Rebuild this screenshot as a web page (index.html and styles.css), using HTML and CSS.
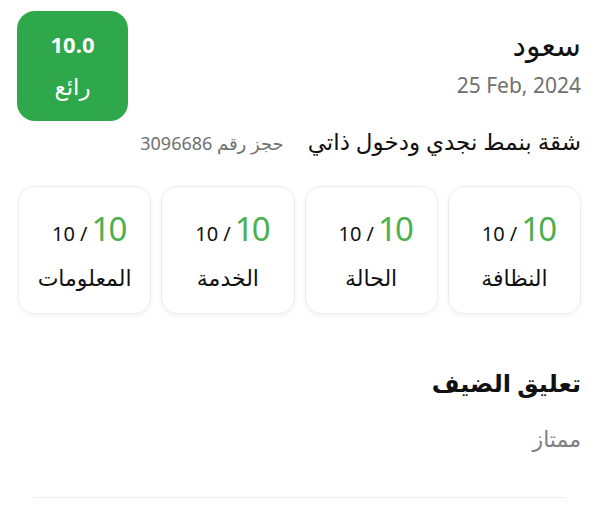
FILE: index.html
```html
<!DOCTYPE html>
<html lang="ar" dir="rtl">
<head>
<meta charset="utf-8">
<link rel="stylesheet" href="styles.css">
</head>
<body>
<div class="page">
  <div class="header">
    <div class="guest">
      <div class="name">سعود</div>
      <div class="date" dir="ltr">25 Feb, 2024</div>
    </div>
    <div class="score">
      <div class="score-num">10.0</div>
      <div class="score-label">رائع</div>
    </div>
  </div>
  <div class="title-row">
    <div class="title">شقة بنمط نجدي ودخول ذاتي</div>
    <div class="booking">حجز رقم 3096686</div>
  </div>
  <div class="cards">
    <div class="card">
      <div class="rate"><span class="small">10 /</span><span class="big">10</span></div>
      <div class="label">النظافة</div>
    </div>
    <div class="card">
      <div class="rate"><span class="small">10 /</span><span class="big">10</span></div>
      <div class="label">الحالة</div>
    </div>
    <div class="card">
      <div class="rate"><span class="small">10 /</span><span class="big">10</span></div>
      <div class="label">الخدمة</div>
    </div>
    <div class="card">
      <div class="rate"><span class="small">10 /</span><span class="big">10</span></div>
      <div class="label">المعلومات</div>
    </div>
  </div>
  <div class="comment">
    <div class="comment-title">تعليق الضيف</div>
    <div class="comment-text">ممتاز</div>
  </div>
  <div class="divider"></div>
</div>
</body>
</html>
```
FILE: styles.css
```css
html, body {
  margin: 0;
  padding: 0;
  background: #ffffff;
}
body {
  font-family: "Noto Sans", "DejaVu Sans", sans-serif;
  color: #111;
}
.page {
  padding: 11px 19px 0 17px;
}
.header {
  display: flex;
  justify-content: space-between;
  align-items: flex-start;
}
.guest {
  padding-top: 14px;
}
.name {
  font-size: 30px;
  line-height: 40px;
  color: #111;
}
.date {
  font-size: 21px;
  line-height: 28px;
  color: #707070;
  margin-top: 6px;
  text-align: right;
}
.score {
  width: 111px;
  height: 110px;
  box-sizing: border-box;
  padding-top: 19px;
  background: #2ea84a;
  border-radius: 18px;
  color: #fff;
  display: flex;
  flex-direction: column;
  align-items: center;
  gap: 14px;
}
.score-num {
  font-size: 22px;
  font-weight: 700;
  line-height: 28px;
}
.score-label {
  font-size: 23px;
  line-height: 28px;
}
.title-row {
  display: flex;
  align-items: baseline;
  gap: 24px;
  margin-top: 4px;
}
.title {
  font-size: 23px;
  line-height: 32px;
}
.booking {
  font-size: 18px;
  color: #707070;
}
.cards {
  display: grid;
  grid-template-columns: repeat(4, 1fr);
  gap: 10px;
  margin-top: 29px;
  margin-left: 1px;
}
.card {
  height: 128px;
  border: 1px solid #ececec;
  border-radius: 16px;
  box-shadow: 0 2px 5px rgba(0,0,0,0.05);
  display: flex;
  flex-direction: column;
  align-items: center;
  justify-content: center;
  box-sizing: border-box;
}
.rate {
  display: flex;
  align-items: baseline;
  gap: 4px;
  direction: ltr;
  margin-left: 8px;
}
.big {
  font-size: 33px;
  line-height: 40px;
  letter-spacing: -2px;
  color: #4caf50;
}
.small {
  font-size: 20px;
  color: #111;
}
.label {
  font-size: 22px;
  line-height: 28px;
  margin-top: 14px;
}
.comment {
  margin-top: 52px;
}
.comment-title {
  font-size: 24px;
  font-weight: 700;
  line-height: 34px;
}
.comment-text {
  font-size: 22px;
  color: #808080;
  margin-top: 22px;
  line-height: 32px;
}
.divider {
  height: 1px;
  background: #efefef;
  margin: 43px 15px 0 16px;
}
```
